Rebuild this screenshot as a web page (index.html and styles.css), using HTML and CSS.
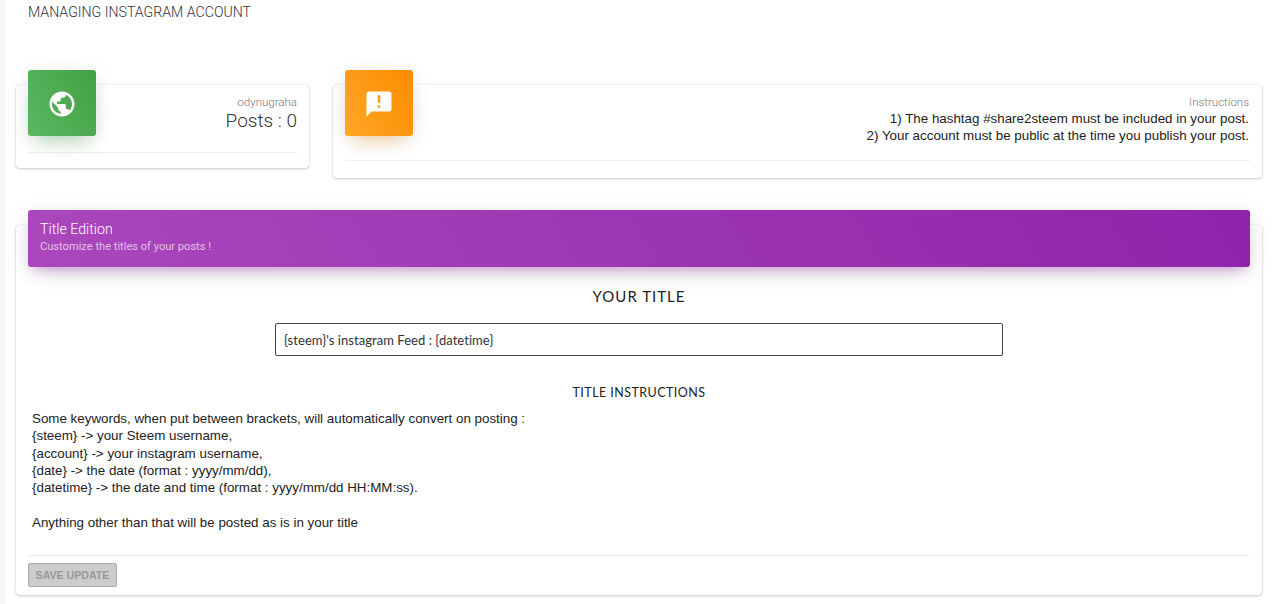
FILE: index.html
```html
<!DOCTYPE html>
<html lang="en">
<head>
<meta charset="utf-8">
<title>Managing Instagram Account</title>
<link rel="stylesheet" href="styles.css">
</head>
<body>
<div class="page">
  <div class="rail"></div>
  <main class="main">
    <h1 class="page-title">MANAGING INSTAGRAM ACCOUNT</h1>
    <div class="stats">
      <section class="card stat-user">
        <div class="stat-head">
          <div class="stat-icon green">
            <svg viewBox="0 0 24 24" width="30" height="30"><path fill="#fff" d="M12 2C6.48 2 2 6.48 2 12s4.48 10 10 10 10-4.48 10-10S17.52 2 12 2zm-1 17.93c-3.95-.49-7-3.85-7-7.93 0-.62.08-1.21.21-1.79L9 15v1c0 1.1.9 2 2 2v1.93zm6.9-2.54c-.26-.81-1-1.39-1.9-1.39h-1v-3c0-.55-.45-1-1-1H8v-2h2c.55 0 1-.45 1-1V7h2c1.1 0 2-.9 2-2v-.41c2.93 1.19 5 4.06 5 7.41 0 2.08-.8 3.97-2.1 5.39z"/></svg>
          </div>
          <div class="stat-text">
            <p class="stat-label">odynugraha</p>
            <p class="stat-value">Posts : 0</p>
          </div>
        </div>
        <div class="stat-foot"></div>
      </section>
      <section class="card stat-info">
        <div class="stat-head">
          <div class="stat-icon orange">
            <svg viewBox="0 0 24 24" width="30" height="30"><path fill="#fff" d="M20 2H4c-1.1 0-1.99.9-1.99 2L2 22l4-4h14c1.1 0 2-.9 2-2V4c0-1.1-.9-2-2-2zm-7 9h-2V5h2v6zm0 4h-2v-2h2v2z"/></svg>
          </div>
          <div class="stat-text">
            <p class="stat-label">Instructions</p>
            <div class="stat-rules">
              <p class="stat-rule">1) The hashtag #share2steem must be included in your post.</p>
              <p class="stat-rule">2) Your account must be public at the time you publish your post.</p>
            </div>
          </div>
        </div>
        <div class="stat-foot"></div>
      </section>
    </div>
    <section class="card edit">
      <header class="edit-head">
        <h2 class="edit-title">Title Edition</h2>
        <p class="edit-sub">Customize the titles of your posts !</p>
      </header>
      <div class="edit-body">
        <h3 class="field-title">YOUR TITLE</h3>
        <input class="field-input" type="text" value="{steem}'s instagram Feed : {datetime}">
        <h4 class="help-title">TITLE INSTRUCTIONS</h4>
        <p class="help-text">Some keywords, when put between brackets, will automatically convert on posting :<br>{steem} -&gt; your Steem username,<br>{account} -&gt; your instagram username,<br>{date} -&gt; the date (format : yyyy/mm/dd),<br>{datetime} -&gt; the date and time (format : yyyy/mm/dd HH:MM:ss).<br><br>Anything other than that will be posted as is in your title</p>
      </div>
      <footer class="edit-foot">
        <button class="save" type="button">SAVE UPDATE</button>
      </footer>
    </section>
  </main>
</div>
</body>
</html>
```
FILE: styles.css
```css
* { box-sizing: border-box; }
html, body { margin: 0; padding: 0; background: #fff; }
body { font-family: "Liberation Sans", Arial, sans-serif; color: #222; overflow: hidden; }
p, h1, h2, h3, h4 { margin: 0; font-weight: 400; }

.page { display: flex; height: 604px; }
.rail { width: 5px; background: #f7f7f7; flex: none; }
.main { flex: 1; padding: 0 18px 0 11px; min-width: 0; }

.page-title {
  font-family: Roboto, sans-serif;
  font-weight: 300;
  font-size: 14.15px;
  line-height: 24px;
  color: #333;
  margin-left: 12px;
  height: 85px;
}

.card {
  background: #fff;
  border-radius: 4px;
  box-shadow: 0 1px 3px rgba(0, 0, 0, 0.2), 0 0 1px rgba(0, 0, 0, 0.2);
}

.stats { display: flex; gap: 24px; align-items: flex-start; }
.stat-user { width: 293px; height: 83px; padding: 0 12px; }
.stat-info { flex: 1; height: 93px; padding: 0 12px; }

.stat-head { display: flex; justify-content: space-between; }
.stat-icon {
  width: 68px;
  height: 66px;
  margin-top: -15px;
  padding-top: 2px;
  border-radius: 3px;
  display: flex;
  align-items: center;
  justify-content: center;
  flex: none;
}
.green {
  background: linear-gradient(60deg, #5cb860, #43a047);
  box-shadow: 0 12px 20px -10px rgba(76, 175, 80, 0.45), 0 4px 20px 0 rgba(0, 0, 0, 0.1);
}
.orange {
  background: linear-gradient(60deg, #ffa726, #fb8c00);
  box-shadow: 0 12px 20px -10px rgba(255, 152, 0, 0.4), 0 4px 20px 0 rgba(0, 0, 0, 0.1);
}
.stat-text { text-align: right; padding-top: 10px; }
.stat-info .stat-text { padding-right: 1px; }
.stat-label { font-family: Roboto, sans-serif; font-weight: 300; font-size: 11.5px; line-height: 14px; color: #777; }
.stat-value { font-family: Roboto, sans-serif; font-weight: 300; font-size: 19px; line-height: 24px; color: #333; }
.stat-rules { margin-top: 1px; }
.stat-rule { font-size: 13.37px; line-height: 17px; color: #222; }
.stat-foot { border-top: 1px solid #eee; margin-top: 16px; }

.edit { margin-top: 47px; height: 370px; padding: 0 12px; }
.edit-head {
  position: relative;
  top: -15px;
  height: 57px;
  margin-bottom: -15px;
  padding: 10px 12px 0;
  border-radius: 3px;
  background: linear-gradient(60deg, #ab47bc, #8e24aa);
  box-shadow: 0 12px 20px -10px rgba(156, 39, 176, 0.28), 0 4px 20px 0 rgba(0, 0, 0, 0.12), 0 7px 8px -5px rgba(156, 39, 176, 0.2);
}
.edit-title { font-family: Roboto, sans-serif; font-weight: 300; font-size: 14.2px; line-height: 18px; color: #fff; }
.edit-sub { font-family: Roboto, sans-serif; font-weight: 400; font-size: 11.1px; line-height: 18px; color: rgba(255, 255, 255, 0.68); }

.edit-body { display: flex; flex-direction: column; align-items: center; }
.field-title { font-family: Lato, sans-serif; font-size: 15px; line-height: 20px; color: #222; letter-spacing: 1px; margin-top: 19px; }
.field-input {
  width: 728px;
  height: 33px;
  margin-top: 17px;
  padding: 0 8px;
  border: 1px solid #444;
  border-radius: 2px;
  background: #fff;
  font-family: Lato, sans-serif;
  font-size: 13px;
  letter-spacing: 0.05px;
  color: #333;
  outline: none;
}
.help-title { font-family: Lato, sans-serif; font-size: 12.5px; line-height: 16px; letter-spacing: 0.45px; color: #222; margin-top: 29px; }
.help-text { align-self: flex-start; margin: 9px 0 0 4px; font-size: 13.37px; line-height: 17.3px; color: #222; }

.edit-foot { margin-top: 24px; padding-top: 7px; border-top: 1px solid #eee; }
.save {
  display: block;
  width: 89px;
  height: 24px;
  padding: 0;
  border: 1px solid #aaa;
  border-radius: 2px;
  background: #ccc;
  font-family: "Liberation Sans", Arial, sans-serif;
  font-weight: 700;
  font-size: 10.6px;
  color: #999;
}
```
